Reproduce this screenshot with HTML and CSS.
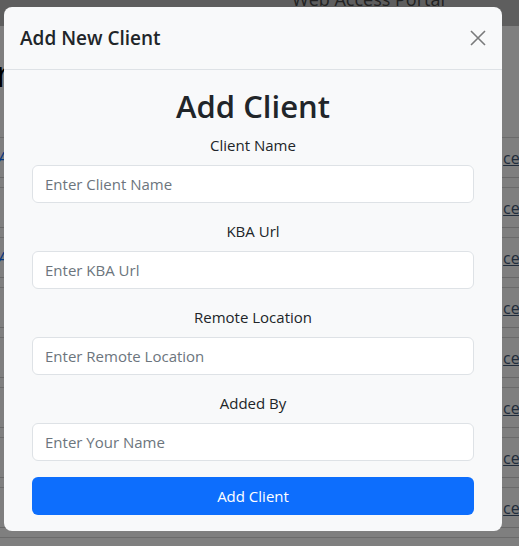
FILE: index.html
```html
<!DOCTYPE html>
<html lang="en">
<head>
<meta charset="utf-8">
<title>Add New Client</title>
<link rel="stylesheet" href="styles.css">
</head>
<body>
<div class="page">
  <header class="nav"><span class="brand">Web Access Portal</span></header>
  <section class="content">
    <h1 class="page-title">remote clients</h1>
  </section>
  <div class="table">
    <div class="row"><div class="row-inner"><a class="first-link" href="#">Access</a><a class="last-link" href="#">cert</a></div></div>
    <div class="row"><div class="row-inner"><span class="first-link"></span><a class="last-link" href="#">cert</a></div></div>
    <div class="row"><div class="row-inner"><a class="first-link" href="#">Access</a><a class="last-link" href="#">cert</a></div></div>
    <div class="row"><div class="row-inner"><span class="first-link"></span><a class="last-link" href="#">cert</a></div></div>
    <div class="row"><div class="row-inner"><span class="first-link"></span><a class="last-link" href="#">cert</a></div></div>
    <div class="row"><div class="row-inner"><span class="first-link"></span><a class="last-link" href="#">cert</a></div></div>
    <div class="row"><div class="row-inner"><span class="first-link"></span><a class="last-link" href="#">cert</a></div></div>
    <div class="row"><div class="row-inner"><span class="first-link"></span><a class="last-link" href="#">cert</a></div></div>
  </div>
</div>

<div class="backdrop"></div>

<div class="modal">
  <div class="modal-content">
    <div class="modal-header">
      <h5 class="modal-title">Add New Client</h5>
      <button class="btn-close" type="button" aria-label="Close">
        <svg width="16" height="16" viewBox="0 0 16 16"><path d="M1 1 L15 15 M15 1 L1 15" stroke="currentColor" stroke-width="1.6" fill="none"/></svg>
      </button>
    </div>
    <div class="modal-body">
      <form class="form">
        <h1 class="form-title">Add Client</h1>
        <div class="group">
          <label class="label">Client Name</label>
          <input class="input" type="text" placeholder="Enter Client Name">
        </div>
        <div class="group">
          <label class="label">KBA Url</label>
          <input class="input" type="text" placeholder="Enter KBA Url">
        </div>
        <div class="group">
          <label class="label">Remote Location</label>
          <input class="input" type="text" placeholder="Enter Remote Location">
        </div>
        <div class="group">
          <label class="label">Added By</label>
          <input class="input" type="text" placeholder="Enter Your Name">
        </div>
        <button class="submit" type="button">Add Client</button>
      </form>
    </div>
  </div>
</div>
</body>
</html>
```

FILE: styles.css
```css
html, body {
  margin: 0;
  padding: 0;
}

body {
  font-family: "Open Sans", "Noto Sans", sans-serif;
  color: #212529;
  background: #fff;
  overflow: hidden;
  height: 546px;
}

.page {
  background: #fff;
  height: 546px;
}

.nav {
  height: 26px;
  background: #bdbdbd;
  overflow: hidden;
  display: flex;
  justify-content: flex-end;
  padding-right: 74px;
}

.brand {
  font-size: 18px;
  line-height: 22px;
  color: #444;
  margin-top: -12px;
}

.content {
  height: 111px;
  padding-top: 28px;
  box-sizing: border-box;
}

.page-title {
  margin: 0 0 0 -4px;
  font-size: 36px;
  font-weight: 500;
  line-height: 40px;
  color: #000;
}

.table {
  border-top: 1px solid #d6d6d6;
}

.row {
  height: 49px;
  border-bottom: 1px solid #d6d6d6;
}

.row-inner {
  height: 40px;
  border-bottom: 1px solid #d0d0d0;
  box-sizing: border-box;
  display: flex;
  align-items: center;
  justify-content: space-between;
}

.first-link {
  color: #0d6efd;
  font-size: 16px;
  text-decoration: none;
  margin-left: -2px;
  font-style: italic;
}

.last-link {
  color: #3f5878;
  font-size: 16px;
  margin-right: -13px;
  text-decoration: underline;
}

.backdrop {
  position: fixed;
  inset: 0;
  background: rgba(0, 0, 0, 0.5);
}

.modal {
  position: fixed;
  inset: 0;
  padding: 7px 17px 0 4px;
}

.modal-content {
  background: #f8f9fa;
  border-radius: 8px;
  overflow: hidden;
}

.modal-header {
  display: flex;
  align-items: center;
  justify-content: space-between;
  padding: 16px;
  border-bottom: 1px solid #dee2e6;
}

.modal-title {
  margin: 0;
  font-size: 19px;
  font-weight: 600;
  line-height: 30px;
  color: #212529;
}

.btn-close {
  width: 16px;
  height: 16px;
  padding: 0;
  border: 0;
  background: transparent;
  color: #797a7b;
  display: flex;
}

.modal-body {
  padding: 17px 16px 16px;
}

.form {
  padding: 0 12px;
  margin: 0;
}

.form-title {
  margin: 0 0 8px;
  text-align: center;
  font-size: 31px;
  font-weight: 600;
  line-height: 38px;
  color: #212529;
}

.group {
  margin-bottom: 16px;
}

.label {
  display: block;
  text-align: center;
  font-size: 15px;
  line-height: 24px;
  margin-bottom: 8px;
  color: #212529;
}

.input {
  display: block;
  width: 100%;
  height: 38px;
  box-sizing: border-box;
  padding: 6px 12px;
  border: 1px solid #dee2e6;
  border-radius: 6px;
  background: #fff;
  font-family: inherit;
  font-size: 15px;
  color: #212529;
}

.input::placeholder {
  color: #6c757d;
}

.submit {
  display: block;
  width: 100%;
  height: 38px;
  border: 0;
  border-radius: 6px;
  background: #0d6efd;
  color: #fff;
  font-family: inherit;
  font-size: 15px;
}
```
